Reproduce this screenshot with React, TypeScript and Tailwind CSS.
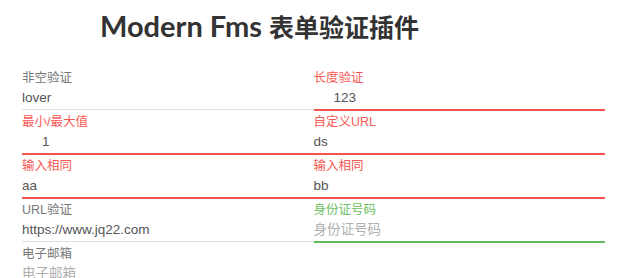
import React from 'react';

type Status = 'idle' | 'error' | 'success';

type Field = {
  label: string;
  value?: string;
  placeholder?: string;
  status: Status;
  indent?: boolean;
};

const fields: Field[] = [
  { label: '非空验证', value: 'lover', status: 'idle' },
  { label: '长度验证', value: '123', status: 'error', indent: true },
  { label: '最小/最大值', value: '1', status: 'error', indent: true },
  { label: '自定义URL', value: 'ds', status: 'error' },
  { label: '输入相同', value: 'aa', status: 'error' },
  { label: '输入相同', value: 'bb', status: 'error' },
  { label: 'URL验证', value: 'https://www.jq22.com', status: 'idle' },
  { label: '身份证号码', placeholder: '身份证号码', status: 'success' },
  { label: '电子邮箱', placeholder: '电子邮箱', status: 'idle' },
];

const FormField: React.FC<{ field: Field; last?: boolean }> = ({ field, last }) => {
  const labelColor =
    field.status === 'error'
      ? 'text-[#f65a55]'
      : field.status === 'success'
        ? 'text-[#6cbf62]'
        : 'text-[#777777]';
  const lineClass =
    field.status === 'error'
      ? 'border-b-2 border-[#f5544f]'
      : field.status === 'success'
        ? 'border-b-2 border-[#63bb5b]'
        : last
          ? 'border-b-2 border-transparent'
          : 'border-b border-[#e0e0e0] mb-px';

  return (
    <div className={`flex flex-col pt-[2px] ${lineClass}`}>
      <div className={`h-[18px] leading-[18px] text-[12.5px] ${labelColor}`}>{field.label}</div>
      <div
        className={`h-[22px] leading-[22px] text-[13.5px] ${field.indent ? 'pl-[20px]' : ''} ${
          field.value ? 'text-[#555555]' : 'text-[#b0b0b0]'
        }`}
      >
        {field.value ?? field.placeholder}
      </div>
    </div>
  );
};

export default function App() {
  return (
    <div
      className="w-[632px] h-[278px] overflow-hidden bg-white"
      style={{ fontFamily: '"Liberation Sans", "Noto Sans CJK SC", sans-serif' }}
    >
      <h1
        className="h-[67px] pl-[100px] pt-[6px] text-[29px] leading-[40px] font-bold text-[#333333] whitespace-nowrap"
        style={{ fontFamily: 'Lato, "Noto Sans CJK SC", sans-serif' }}
      >
        Modern Fms <span className="text-[25px]">表单验证插件</span>
      </h1>
      <div className="ml-[22px] w-[583px] grid grid-cols-2">
        {fields.map((f, i) => (
          <FormField key={i} field={f} last={i === fields.length - 1} />
        ))}
      </div>
    </div>
  );
}
